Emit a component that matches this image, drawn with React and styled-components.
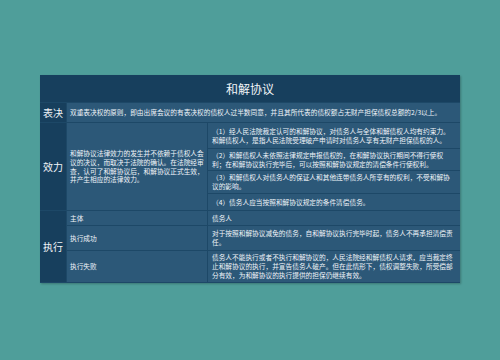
import React from "react";
import styled, { createGlobalStyle } from "styled-components";

const Global = createGlobalStyle`
  html, body { margin: 0; padding: 0; background: #4f9e9a; }
  body { width: 500px; height: 360px; overflow: hidden; }
`;

const Page = styled.div`
  padding: 75px 40px 0 40px;
  font-family: "Noto Sans CJK SC", "Noto Sans", sans-serif;
`;

const Table = styled.div`
  display: grid;
  width: 420px;
  grid-template-columns: 26px 140px 252px;
  grid-template-rows: 27px 19px 25px 21px 22px 16px 14px 24px 31px;
  gap: 1px;
  background: #1d4867;
  padding-bottom: 1px;
  box-shadow: 1px 1px 2px rgba(0, 0, 0, 0.25);
`;

const Title = styled.div`
  grid-column: 1 / -1;
  background: #173f5d;
  color: #f2f5f8;
  font-size: 12px;
  display: flex;
  align-items: center;
  justify-content: center;
`;

const Label = styled.div`
  grid-column: 1;
  grid-row: ${(p) => p.$rows};
  background: #173f5d;
  color: #f2f5f8;
  font-size: 10px;
  display: flex;
  align-items: center;
  justify-content: center;
`;

const Cell = styled.div`
  grid-column: ${(p) => p.$col};
  grid-row: ${(p) => p.$row};
  background: #2c5878;
  color: #f0f4f8;
  font-size: 6.7px;
  line-height: 8.7px;
  padding: ${(p) => (p.$col === "3" ? "0 5px 0 4px" : "0 2px 0 3px")};
  display: flex;
  align-items: center;
  box-sizing: border-box;
  overflow: hidden;
`;

export default function App() {
  return (
    <>
      <Global />
      <Page>
        <Table>
          <Title>和解协议</Title>

          <Label $rows="2">表决</Label>
          <Cell $col="2 / 4" $row="2">
            双重表决权的原则，即由出席会议的有表决权的债权人过半数同意，并且其所代表的债权额占无财产担保债权总额的2/3以上。
          </Cell>

          <Label $rows="3 / 7">效力</Label>
          <Cell $col="2" $row="3 / 7">
            和解协议法律效力的发生并不依赖于债权人会议的决议，而取决于法院的确认。在法院经审查，认可了和解协议后，和解协议正式生效，并产生相应的法律效力。
          </Cell>
          <Cell $col="3" $row="3">
            （1）经人民法院裁定认可的和解协议，对债务人与全体和解债权人均有约束力。和解债权人，是指人民法院受理破产申请时对债务人享有无财产担保债权的人。
          </Cell>
          <Cell $col="3" $row="4">
            （2）和解债权人未依照法律规定申报债权的，在和解协议执行期间不得行使权利；在和解协议执行完毕后，可以按照和解协议规定的清偿条件行使权利。
          </Cell>
          <Cell $col="3" $row="5">
            （3）和解债权人对债务人的保证人和其他连带债务人所享有的权利，不受和解协议的影响。
          </Cell>
          <Cell $col="3" $row="6">
            （4）债务人应当按照和解协议规定的条件清偿债务。
          </Cell>

          <Label $rows="7 / 10">执行</Label>
          <Cell $col="2" $row="7">主体</Cell>
          <Cell $col="3" $row="7">债务人</Cell>
          <Cell $col="2" $row="8">执行成功</Cell>
          <Cell $col="3" $row="8">
            对于按照和解协议减免的债务，自和解协议执行完毕时起，债务人不再承担清偿责任。
          </Cell>
          <Cell $col="2" $row="9">执行失败</Cell>
          <Cell $col="3" $row="9">
            债务人不能执行或者不执行和解协议的，人民法院经和解债权人请求，应当裁定终止和解协议的执行，并宣告债务人破产。但在此情形下，债权调整失败，所受偿部分有效，为和解协议的执行提供的担保仍继续有效。
          </Cell>
        </Table>
      </Page>
    </>
  );
}
